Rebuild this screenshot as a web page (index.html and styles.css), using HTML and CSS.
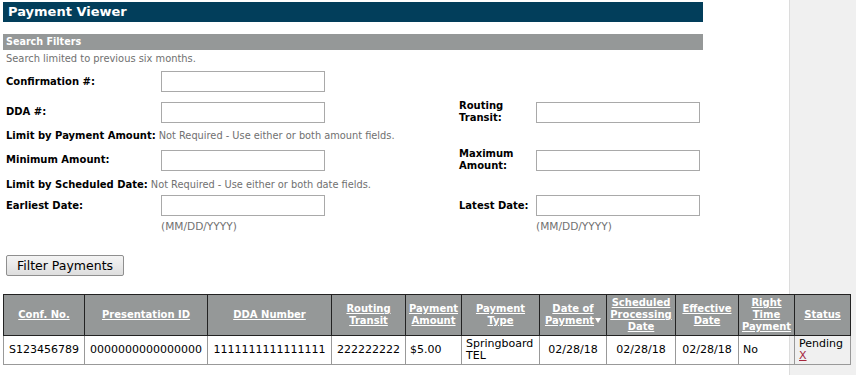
FILE: index.html
```html
<!DOCTYPE html>
<html lang="en">
<head>
<meta charset="utf-8">
<title>Payment Viewer</title>
<link rel="stylesheet" href="styles.css">
</head>
<body>
<div class="page">
  <aside class="sidebar"></aside>
  <main class="main">
    <h1 class="title-bar">Payment Viewer</h1>
    <h2 class="section-bar">Search Filters</h2>
    <p class="note">Search limited to previous six months.</p>
    <form class="filters">
      <div class="field-row row-first">
        <label class="label">Confirmation #:</label>
        <input class="text-input" type="text">
      </div>
      <div class="field-row row-second">
        <label class="label">DDA #:</label>
        <input class="text-input" type="text">
        <label class="label">Routing Transit:</label>
        <input class="text-input" type="text">
      </div>
      <div class="limit-row limit-amount">
        <span class="label">Limit by Payment Amount:</span>
        <span class="hint">Not Required - Use either or both amount fields.</span>
      </div>
      <div class="field-row">
        <label class="label">Minimum Amount:</label>
        <input class="text-input" type="text">
        <label class="label">Maximum Amount:</label>
        <input class="text-input" type="text">
      </div>
      <div class="limit-row limit-date">
        <span class="label">Limit by Scheduled Date:</span>
        <span class="hint">Not Required - Use either or both date fields.</span>
      </div>
      <div class="field-row">
        <label class="label">Earliest Date:</label>
        <input class="text-input" type="text">
        <label class="label">Latest Date:</label>
        <input class="text-input" type="text">
      </div>
      <div class="field-row hint-row">
        <span></span>
        <span class="format-hint">(MM/DD/YYYY)</span>
        <span></span>
        <span class="format-hint">(MM/DD/YYYY)</span>
      </div>
      <div class="actions">
        <button class="filter-btn" type="button">Filter Payments</button>
      </div>
    </form>
    <table class="payments">
      <colgroup>
        <col class="w-conf">
        <col class="w-pres">
        <col class="w-dda">
        <col class="w-rt">
        <col class="w-amt">
        <col class="w-type">
        <col class="w-date">
        <col class="w-sched">
        <col class="w-eff">
        <col class="w-right">
        <col class="w-status">
      </colgroup>
      <thead>
        <tr>
          <th><a href="#">Conf. No.</a></th>
          <th><a href="#">Presentation ID</a></th>
          <th><a href="#">DDA Number</a></th>
          <th><a href="#">Routing Transit</a></th>
          <th><a href="#">Payment Amount</a></th>
          <th><a href="#">Payment Type</a></th>
          <th><a href="#">Date of Payment</a><svg class="sort-arrow" width="6" height="5" viewBox="0 0 6 5"><polygon points="0,0 6,0 3,5" fill="#fff"/></svg></th>
          <th><a href="#">Scheduled Processing Date</a></th>
          <th><a href="#">Effective Date</a></th>
          <th><a href="#">Right Time Payment</a></th>
          <th><a href="#">Status</a></th>
        </tr>
      </thead>
      <tbody>
        <tr>
          <td class="num">S123456789</td>
          <td class="num">0000000000000000</td>
          <td class="num">1111111111111111</td>
          <td class="num">222222222</td>
          <td>$5.00</td>
          <td>Springboard TEL</td>
          <td class="num">02/28/18</td>
          <td class="num">02/28/18</td>
          <td class="num">02/28/18</td>
          <td>No</td>
          <td>Pending<br><a class="cancel-link" href="#">X</a></td>
        </tr>
      </tbody>
    </table>
  </main>
</div>
</body>
</html>
```

FILE: styles.css
```css
html, body {
  margin: 0;
  padding: 0;
  background: #fff;
}

body {
  font-family: "DejaVu Sans", Verdana, sans-serif;
  color: #000;
}

.page {
  display: grid;
  grid-template-columns: 789px 1fr;
  min-height: 375px;
}

.sidebar {
  grid-column: 2;
  grid-row: 1;
  background: #f0f0f0;
  border-left: 1px solid #dcdcdc;
}

.main {
  grid-column: 1;
  grid-row: 1;
  min-width: 0;
  padding: 2px 0 0 3px;
}

.title-bar {
  margin: 0;
  width: 700px;
  height: 20px;
  box-sizing: border-box;
  padding-left: 5px;
  background: #023e5b;
  color: #fff;
  font-size: 13px;
  font-weight: bold;
  line-height: 20px;
}

.section-bar {
  margin: 12px 0 0;
  width: 700px;
  height: 16px;
  box-sizing: border-box;
  padding-left: 3px;
  background: #959898;
  color: #fff;
  font-size: 9.6px;
  font-weight: bold;
  line-height: 16px;
}

.note {
  margin: 3px 0 0;
  padding-left: 3px;
  height: 11px;
  font-size: 9.9px;
  line-height: 11px;
  color: #707070;
}

.filters {
  margin: 0;
  padding-left: 3px;
}

.field-row {
  display: grid;
  grid-template-columns: 155px 298px 77px 164px;
  align-items: center;
  height: 21px;
}

.row-first {
  margin-top: 7px;
}

.row-second {
  margin-top: 8px;
}

.label {
  font-size: 10px;
  font-weight: bold;
  line-height: 12px;
  color: #000;
}

.hint {
  font-size: 9.8px;
  line-height: 12px;
  color: #707070;
}

.format-hint {
  font-size: 10.6px;
  line-height: 11px;
  color: #707070;
}

.text-input {
  box-sizing: border-box;
  width: 164px;
  height: 21px;
  margin: 0;
  border: 1px solid #a9a9a9;
  background: #fff;
  padding: 0 2px;
}

.limit-row {
  display: flex;
  align-items: baseline;
  gap: 3px;
  height: 13px;
  white-space: nowrap;
}

.limit-amount {
  padding-top: 9px;
  padding-bottom: 5px;
}

.limit-date {
  padding-top: 10px;
  padding-bottom: 3px;
}

.hint-row {
  height: 11px;
  margin-top: 5px;
}

.actions {
  margin-top: 23px;
}

.filter-btn {
  display: block;
  box-sizing: border-box;
  width: 118px;
  height: 21px;
  margin: 0;
  padding: 0;
  font-family: "DejaVu Sans", Verdana, sans-serif;
  font-size: 12.5px;
  color: #000;
  background: linear-gradient(#f4f4f4, #dedede);
  border: 1px solid #8f8f8f;
  border-radius: 2px;
}

.payments {
  margin-top: 18px;
  border-collapse: collapse;
  table-layout: fixed;
  width: 847px;
}

.w-conf { width: 81px; }
.w-pres { width: 123px; }
.w-dda { width: 124px; }
.w-rt { width: 74px; }
.w-amt { width: 56px; }
.w-type { width: 78px; }
.w-date { width: 67px; }
.w-sched { width: 69px; }
.w-eff { width: 63px; }
.w-right { width: 56px; }
.w-status { width: 56px; }

.payments th {
  background: #959898;
  border: 1px solid #222;
  padding: 2px 1px;
  height: 35px;
  font-size: 10px;
  font-weight: bold;
  line-height: 12px;
  text-align: center;
  vertical-align: middle;
  color: #fff;
}

.payments th a {
  color: #fff;
  text-decoration: underline;
}

.sort-arrow {
  margin-left: 1px;
  vertical-align: 1px;
}

.payments td {
  border: 1px solid #999;
  padding: 2px 4px;
  height: 24px;
  font-size: 11px;
  line-height: 12px;
  vertical-align: middle;
  text-align: left;
}

.payments td.num {
  text-align: center;
  padding: 2px 2px;
}

.cancel-link {
  color: #a5253d;
  text-decoration: underline;
}
```
